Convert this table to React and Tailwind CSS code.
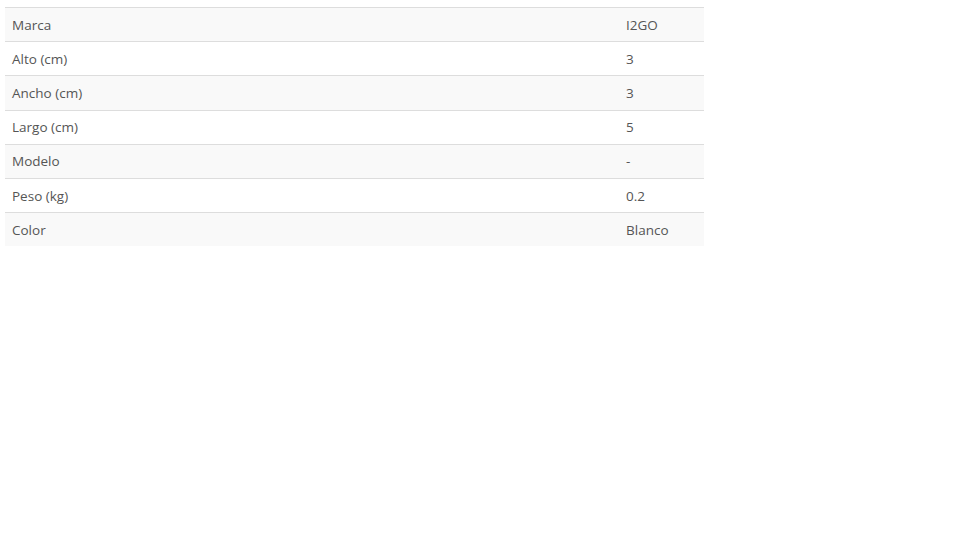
const SPECS = [
  ['Marca', 'I2GO'],
  ['Alto (cm)', '3'],
  ['Ancho (cm)', '3'],
  ['Largo (cm)', '5'],
  ['Modelo', '-'],
  ['Peso (kg)', '0.2'],
  ['Color', 'Blanco'],
]

export default function App() {
  return (
    <div className="w-[960px] h-[540px] bg-white pt-[7px] pl-[5px]" style={{ fontFamily: '"Open Sans", sans-serif' }}>
      <table className="w-[699px] border-collapse text-[13.5px] text-[#555]">
        <tbody>
          {SPECS.map(([k, v], i) => (
            <tr key={k} className={i % 2 === 0 ? 'bg-[#f9f9f9]' : 'bg-white'}>
              <td className="w-[613px] border-t border-[#ddd] px-[7px] pt-[8.5px] pb-[7.5px] leading-[17.2px]">{k}</td>
              <td className="border-t border-[#ddd] px-[8px] pt-[8.5px] pb-[7.5px] leading-[17.2px]">{v}</td>
            </tr>
          ))}
        </tbody>
      </table>
    </div>
  )
}
